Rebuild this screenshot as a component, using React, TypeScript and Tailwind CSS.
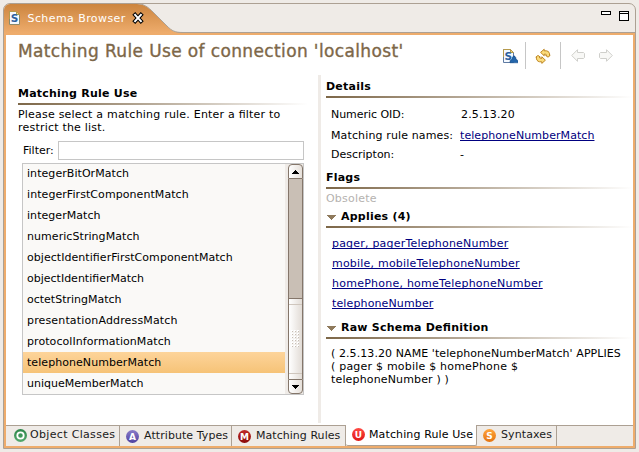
import React from "react";

const RULES = [
  { name: "integerBitOrMatch", ls: "tracking-[0.06px]" },
  { name: "integerFirstComponentMatch", ls: "tracking-[0.07px]" },
  { name: "integerMatch", ls: "tracking-[0.05px]" },
  { name: "numericStringMatch", ls: "tracking-[0.06px]" },
  { name: "objectIdentifierFirstComponentMatch", ls: "tracking-[0.05px]" },
  { name: "objectIdentifierMatch", ls: "" },
  { name: "octetStringMatch", ls: "" },
  { name: "presentationAddressMatch", ls: "tracking-[0.15px]" },
  { name: "protocolInformationMatch", ls: "tracking-[0.07px]" },
  { name: "telephoneNumberMatch", ls: "tracking-[0.06px]", selected: true },
  { name: "uniqueMemberMatch", ls: "" },
];

const APPLIES = [
  { name: "pager, pagerTelephoneNumber", ls: "tracking-[0.2px]" },
  { name: "mobile, mobileTelephoneNumber", ls: "tracking-[0.21px]" },
  { name: "homePhone, homeTelephoneNumber", ls: "tracking-[0.24px]" },
  { name: "telephoneNumber", ls: "tracking-[0.13px]" },
];

function Rule({ className = "" }: { className?: string }) {
  return <div className={`h-[2px] bg-linear-to-r from-[#7d6748] to-white ${className}`} />;
}

function Heading({ children, className = "" }: { children: React.ReactNode; className?: string }) {
  return <h2 className={`flex font-bold tracking-[0.22px] ${className}`}>{children}</h2>;
}

function Link({ children, className = "" }: { children: React.ReactNode; className?: string }) {
  return (
    <span className={`text-[#000080] underline decoration-1 underline-offset-1 [text-decoration-skip-ink:none] ${className}`}>
      {children}
    </span>
  );
}

function Triangle() {
  return (
    <svg width="9" height="5" className="mt-[5px] ml-px mr-[5px] shrink-0" shapeRendering="crispEdges">
      <path d="M0 0H9V1H8V2H7V3H6V4H5V5H4V4H3V3H2V2H1V1H0Z" fill="#8f7a5c" />
    </svg>
  );
}

function SchemaIcon({ hat = false }: { hat?: boolean }) {
  return (
    <svg width="16" height="16" viewBox="0 0 16 16">
      <path d="M1.5 1.5H8.5L11.5 4.5V14.5H1.5Z" fill="#f4f9ff" stroke={hat ? "#5f7ba3" : "#8b8a6b"} />
      <path d="M1.5 9V1.5H8.5" fill="none" stroke="#b79a4b" />
      <path d="M8.5 1.5V4.5H11.5Z" fill="#f1d58a" stroke="#b79a4b" />
      <text x={hat ? 2.6 : 2.8} y="12" fontSize="10.5" fontWeight="bold" fill="#2c5f9e" fontFamily="DejaVu Sans, sans-serif">S</text>
      {hat && (
        <path d="M11 8H13V9.5H14V11.5H15V12.5H16V14.8H8V12.5H9V11.5H10V9.5H11Z" fill="#2466ab" stroke="#174b87" strokeWidth=".5" />
      )}
    </svg>
  );
}

function RefreshIcon() {
  const half = "M5.6 4.4L9.2 1.2V2.8H11.4C13.8 3.2 14.9 5 14.5 7.4H15.2L13 9.2L10.6 7.4H11.6C11.5 6.4 10.8 6.1 9.2 6.2V7.8Z";
  return (
    <svg width="16" height="16" viewBox="0 0 16 16">
      <g fill="#fbdc7c" stroke="#b87c14" strokeWidth=".9" strokeLinejoin="round">
        <path d={half} />
        <path d={half} transform="rotate(180 8 8.3)" />
      </g>
    </svg>
  );
}

function Arrow({ right = false }: { right?: boolean }) {
  return (
    <svg width="14" height="13" viewBox="0 0 14 13" className={right ? "-scale-x-100" : ""}>
      <path d="M.7 6.5L6.5 .7V3.5H12.5L13.5 4.5V8.5L12.5 9.5H6.5V12.3Z" fill="#f8f8f6" stroke="#cfcfcb" strokeLinejoin="round" />
    </svg>
  );
}

function Badge({ letter, from, to, className = "" }: { letter: string; from: string; to: string; className?: string }) {
  const id = `badge-${letter}`;
  return (
    <svg width="13" height="13" viewBox="0 0 13 13" className={`shrink-0 ${className}`}>
      <defs>
        <linearGradient id={id} x1="0" y1="0" x2="0" y2="1">
          <stop offset="0" stopColor={from} />
          <stop offset="1" stopColor={to} />
        </linearGradient>
      </defs>
      <circle cx="6.5" cy="6.5" r="6.5" fill={`url(#${id})`} />
      {letter === "O" ? (
        <>
          <circle cx="6.5" cy="6.5" r="3.2" fill="none" stroke="#fff" strokeWidth="1.8" />
          <circle cx="6.5" cy="6.5" r="1.3" fill="#3a9457" />
        </>
      ) : (
        <text x="6.5" y="9.8" textAnchor="middle" fontSize="9" fontWeight="bold" fill="#fff" fontFamily="DejaVu Sans, sans-serif">
          {letter}
        </text>
      )}
    </svg>
  );
}

function ScrollBar() {
  return (
    <div className="ml-[3px] flex h-[230px] w-[15px] flex-col">
      <div className="flex h-[15px] items-center justify-center rounded-t-[4px] border border-[#84766a] bg-linear-to-r from-white to-[#e6e0da]">
        <svg width="7" height="4" shapeRendering="crispEdges">
          <path d="M3 0H4V1H5V2H6V3H7V4H0V3H1V2H2V1H3Z" fill="#000" />
        </svg>
      </div>
      <div className="h-[119px] border-x border-[#84766a] bg-[#c9bfb5]" />
      <div className="flex h-[81px] flex-col items-center justify-between border-x border-t border-[#84766a] bg-linear-to-r from-white to-[#e2dcd6] py-[5px]">
        <div className="h-px w-full bg-[#cfc6bd]" />
        <svg width="9" height="18" shapeRendering="crispEdges">
          {[0, 3, 6, 9, 12, 15].map((y) =>
            [0, 3, 6].map((x) => (
              <g key={`${x}-${y}`}>
                <rect x={x} y={y} width="2" height="2" fill="#fff" />
                <rect x={x + 1} y={y + 1} width="1" height="1" fill="#c8beb4" />
              </g>
            )),
          )}
        </svg>
        <div className="h-px w-full bg-[#cfc6bd]" />
      </div>
      <div className="flex h-[15px] items-center justify-center rounded-b-[4px] border border-[#84766a] bg-linear-to-r from-white to-[#e6e0da]">
        <svg width="7" height="4" shapeRendering="crispEdges">
          <path d="M0 0H7V1H6V2H5V3H4V4H3V3H2V2H1V1H0Z" fill="#000" />
        </svg>
      </div>
    </div>
  );
}

export default function App() {
  return (
    <div className="h-[452px] w-[639px] overflow-hidden bg-[#efebe7] pt-[3px] pl-[3px] font-['DejaVu_Sans',sans-serif] text-[11px] leading-[13px] whitespace-nowrap text-black [font-feature-settings:'liga'_1]">
      <div className="flex h-[446px] w-[633px] flex-col overflow-hidden rounded-t-[7px] border border-[#aca093]">
        {/* View title bar */}
        <header className="relative flex h-[29px] shrink-0 border-b border-[#aca093]">
          <svg width="180" height="29" className="absolute top-0 left-0">
            <defs>
              <linearGradient id="tab" x1="0" y1="0" x2="0" y2="1">
                <stop offset="0" stopColor="#cc853f" />
                <stop offset="1" stopColor="#eeac6c" />
              </linearGradient>
            </defs>
            <path d="M0 0H133C140 0 144 3 149 8L163 22C168 27 171 28.5 177 28.5V29H0Z" fill="url(#tab)" />
            <path d="M133 -.5C140 0 144 3 149 8L163 22C168 27 171 28.5 179 28.5" fill="none" stroke="#aca093" />
          </svg>
          <div className="relative flex w-full">
            <div className="mt-[6px] ml-[4px]"><SchemaIcon /></div>
            <div className="mt-[8px] ml-[3.5px] w-[98.5px] tracking-[0.42px] text-white">Schema Browser</div>
            <svg width="12" height="12" className="mt-[8px] ml-[6px]">
              <path d="M3.1 2.8L8.9 9.2M8.9 2.8L3.1 9.2" stroke="#000" strokeWidth="4" strokeLinecap="square" />
              <path d="M3.1 2.8L8.9 9.2M8.9 2.8L3.1 9.2" stroke="#fff" strokeWidth="2" strokeLinecap="square" />
            </svg>
            <div className="mt-[7px] mr-[6px] ml-auto flex gap-2">
              <div className="h-[4px] w-[10px] border border-black bg-white" />
              <div className="h-[10px] w-[10px] border border-black bg-white pt-px">
                <div className="h-px bg-black" />
              </div>
            </div>
          </div>
        </header>

        <div className="flex grow flex-col border-2 border-[#eeac6c] bg-white">
          {/* Form heading */}
          <div className="flex h-[40px] shrink-0">
            <h1 className="mt-[6px] ml-[12px] text-[17px] leading-[20px] tracking-[0.37px] text-[#7d6748] [-webkit-text-stroke:0.35px_#7d6748]">
              Matching Rule Use of connection 'localhost'
            </h1>
            <div className="mt-[7px] mr-[20px] ml-auto flex h-[27px] items-center">
              <div className="mr-[7px]"><SchemaIcon hat /></div>
              <div className="h-full w-px bg-[#c6c6c6]" />
              <div className="mx-[9px]"><RefreshIcon /></div>
              <div className="h-full w-px bg-[#c6c6c6]" />
              <div className="mr-[14px] ml-[10px]"><Arrow /></div>
              <Arrow right />
            </div>
          </div>

          <main className="flex h-[350px] shrink-0">
            <section className="w-[312px] pt-[12px] pl-[12px]">
              <Heading>Matching Rule Use</Heading>
              <Rule className="mt-[3px] w-[290px]" />
              <p className="mt-[3px] tracking-[0.21px]">Please select a matching rule. Enter a filter to<br />restrict the list.</p>
              <div className="mt-[7px] ml-[5px] flex">
                <label className="mt-[3px] w-[35px]">Filter:</label>
                <input className="h-[19px] w-[246px] border border-[#c6c6c6] bg-white" />
              </div>
              <div className="mt-[3px] ml-[4px] flex h-[232px] w-[282px] border border-[#c6c6c6] bg-[#efebe7]">
                <ul className="h-[230px] w-[262px] overflow-hidden bg-[#faf9f7]">
                  {RULES.map((r) => (
                    <li
                      key={r.name}
                      className={`h-[21px] pt-[4px] pl-[4px] first:h-[20px] first:pt-[3px] ${r.selected ? "bg-linear-to-b from-[#fdd49a] to-[#f6c377]" : ""} ${r.ls}`}
                    >
                      {r.name}
                    </li>
                  ))}
                </ul>
                <ScrollBar />
              </div>
            </section>
            <div className="h-[348px] w-[3px] bg-[#efebe7]" />

            <section className="w-[312px] pt-[5px] pl-[5px]">
              <Heading>Details</Heading>
              <Rule className="mt-[3px]" />
              <dl className="mt-[10px] ml-[5px] grid grid-cols-[129px_1fr] grid-rows-[21px_19px_23px]">
                <dt className="tracking-[-0.05px]">Numeric OID:</dt>
                <dd className="pl-px tracking-[0.15px]">2.5.13.20</dd>
                <dt className="tracking-[0.13px]">Matching rule names:</dt>
                <dd><Link className="tracking-[0.07px]">telephoneNumberMatch</Link></dd>
                <dt>Descripton:</dt>
                <dd>-</dd>
              </dl>
              <Heading>Flags</Heading>
              <Rule className="mt-[3px]" />
              <p className="mt-[3px] tracking-[0.2px] text-[#b5b2af]">Obsolete</p>
              <Heading className="mt-[5px]"><Triangle />Applies (4)</Heading>
              <Rule className="mt-[3px]" />
              <ul className="mt-[9px] ml-[6px]">
                {APPLIES.map((a) => (
                  <li key={a.name} className="h-[20px]"><Link className={a.ls}>{a.name}</Link></li>
                ))}
              </ul>
              <Heading className="mt-[4px]"><Triangle />Raw Schema Definition</Heading>
              <Rule className="mt-[3px]" />
              <p className="mt-[8px] ml-[5px]">
                <span className="tracking-[0.08px]">( 2.5.13.20 NAME 'telephoneNumberMatch' APPLIES</span><br />
                <span className="tracking-[0.21px]">( pager $ mobile $ homePhone $</span><br />
                <span className="tracking-[0.15px]">telephoneNumber ) )</span>
              </p>
            </section>
          </main>

          {/* Page tabs */}
          <nav className="flex h-[21px] shrink-0 bg-[#efebe7] text-[#1a1a1a]">
            <div className="flex w-[114px] border-t border-r border-[#aca093] pt-[2px] pl-[8px]">
              <Badge letter="O" from="#2c8549" to="#55aa6e" className="mt-px" />
              <span className="ml-[3px] tracking-[0.33px]">Object Classes</span>
            </div>
            <div className="flex w-[112px] border-t border-r border-[#aca093] pt-[3px] pl-[6px]">
              <Badge letter="A" from="#8a7cc9" to="#4d40a0" className="mt-px" />
              <span className="ml-[5px] tracking-[0.07px]">Attribute Types</span>
            </div>
            <div className="flex w-[114px] border-t border-r border-[#aca093] pt-[3px] pl-[6px]">
              <Badge letter="M" from="#c02a2a" to="#8a0a0a" className="mt-px" />
              <span className="ml-[5px] tracking-[0.04px]">Matching Rules</span>
            </div>
            <div className="flex w-[131px] rounded-b-[2px] border-r border-b border-[#aca093] bg-white pt-[3px] pl-[6px] text-black">
              <Badge letter="U" from="#ff4a44" to="#e01616" />
              <span className="ml-[4px] tracking-[0.12px]">Matching Rule Use</span>
            </div>
            <div className="flex w-[80px] border-t border-r border-[#aca093] pt-[2px] pl-[6px]">
              <Badge letter="S" from="#ffa53c" to="#e57410" className="mt-px" />
              <span className="ml-[5px] tracking-[0.1px]">Syntaxes</span>
            </div>
            <div className="grow border-t border-[#aca093]" />
          </nav>
        </div>
      </div>
    </div>
  );
}
